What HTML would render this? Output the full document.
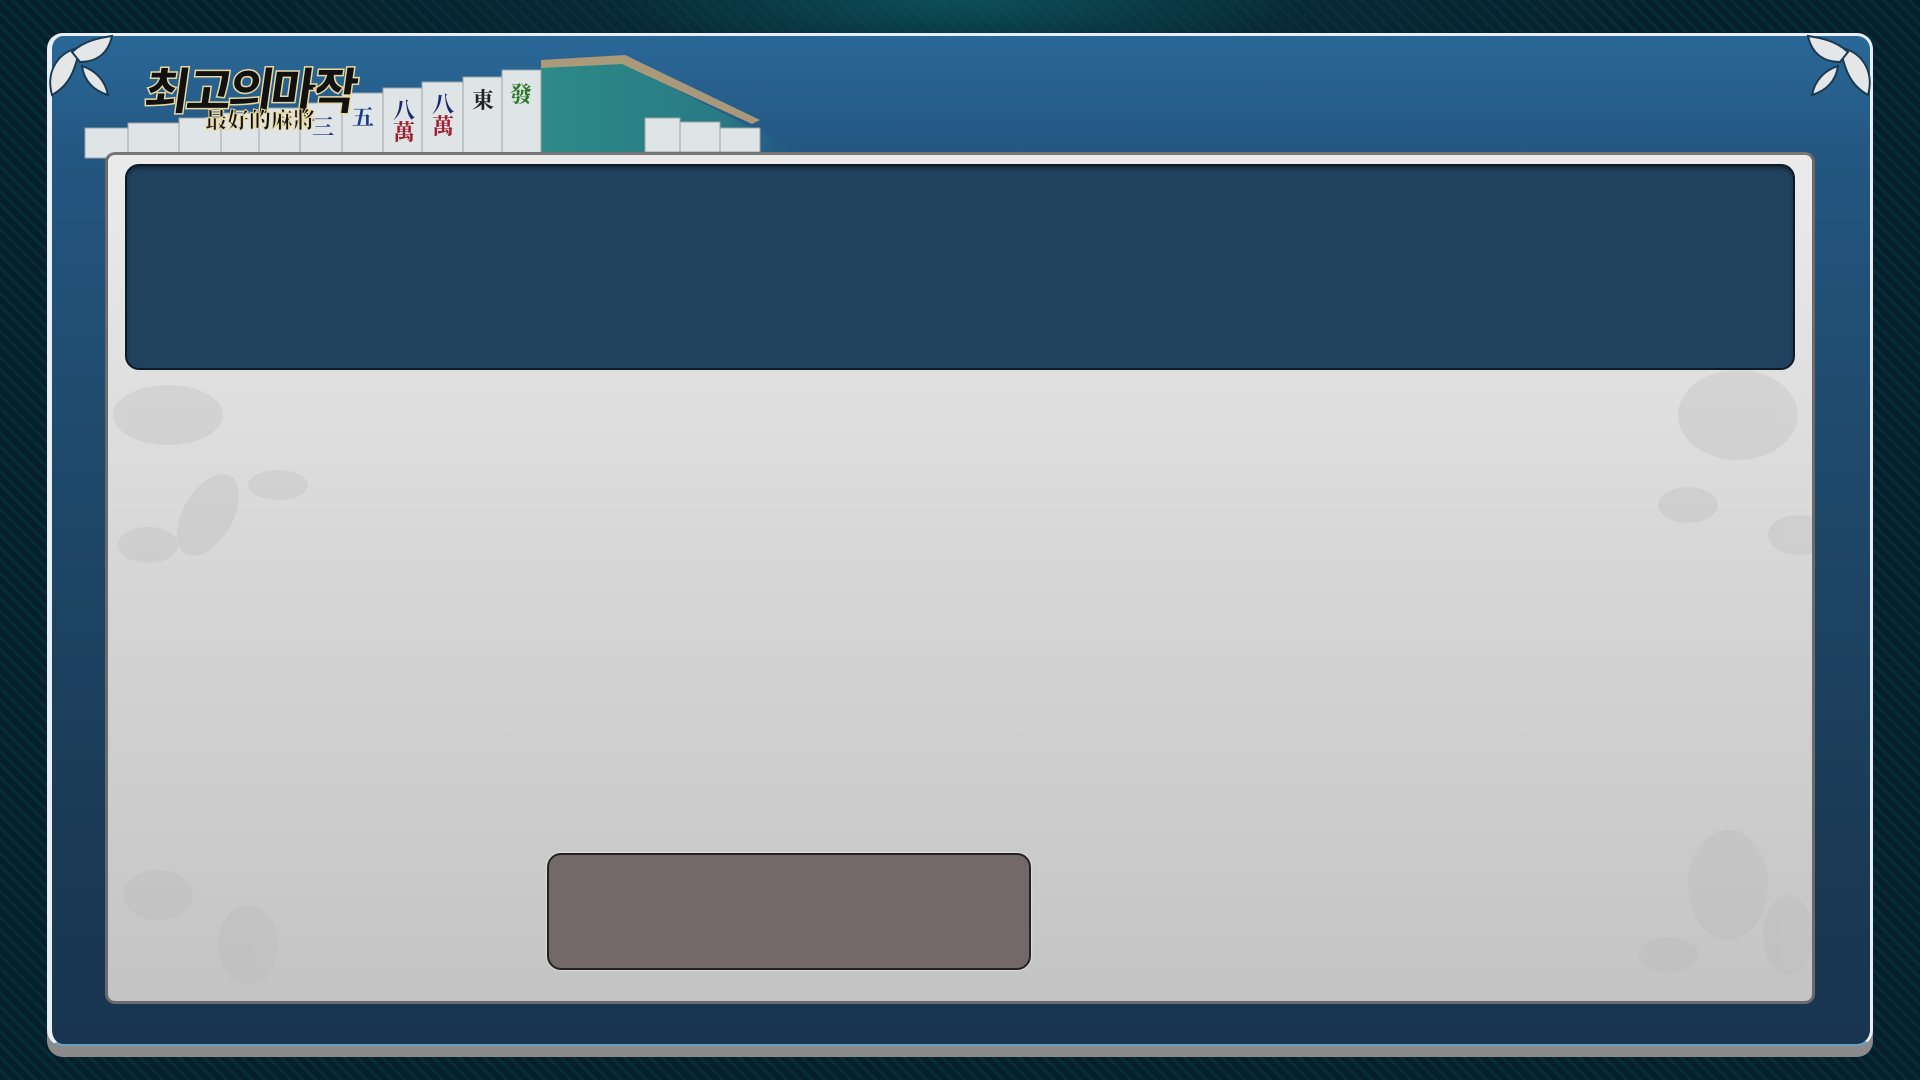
<!DOCTYPE html>
<html><head><meta charset="utf-8"><style>
*{margin:0;padding:0;box-sizing:border-box}
body{width:1920px;height:1080px;overflow:hidden;background:radial-gradient(ellipse 700px 120px at 960px 0,rgba(14,90,100,.8) 0%,rgba(10,51,64,.5) 50%,rgba(0,0,0,0) 100%),repeating-linear-gradient(45deg,#05202a 0 6px,#082b38 6px 9px),#05202a;position:relative;font-family:"Liberation Sans",sans-serif}
.shadow{position:absolute;left:47px;top:40px;width:1826px;height:1017px;border-radius:16px;background:#8a8a8a}
.frame{position:absolute;left:47px;top:33px;width:1826px;height:1013px;border-radius:16px;background:linear-gradient(#2a6898 0%,#235680 12%,#1f4a6c 40%,#1a3a56 80%,#183450 100%);border:3px solid #e8eef2;border-left-width:5px;border-bottom:2px solid #6a9fc4}
.panel{position:absolute;left:105px;top:152px;width:1710px;height:852px;border-radius:10px;background:linear-gradient(#ebebeb,#d6d6d6 50%,#c4c4c4);border:3px solid #6a6a6a;border-top-color:#777;overflow:hidden}
.box{position:absolute;left:125px;top:164px;width:1670px;height:206px;border-radius:14px;background:#21425f;border:2px solid #0e1a24;box-shadow:inset 0 3px 3px rgba(0,0,0,.35)}
.btn{position:absolute;left:547px;top:853px;width:484px;height:117px;border-radius:14px;background:#726968;border:2px solid #222;box-shadow:0 0 2px #fff}
.logo1{position:absolute;left:145px;top:52px;font-family:"Noto Sans CJK KR",sans-serif;font-weight:900;font-size:50px;color:#111;letter-spacing:-4px;-webkit-text-stroke:1.5px #e8d8a0;transform:skewX(-8deg)}
.logo2{position:absolute;left:205px;top:104px;font-family:"Noto Serif CJK SC",serif;font-weight:900;font-size:22px;color:#111;-webkit-text-stroke:1px #e8d8a0}
</style></head><body>
<div class="shadow"></div>
<div class="frame"></div>
<svg style="position:absolute;left:0;top:0" width="1920" height="160">
 <defs><linearGradient id="tg" x1="0" x2="1"><stop offset="0" stop-color="#2c8a88"/><stop offset=".7" stop-color="#2a7a84"/><stop offset="1" stop-color="#23608a" stop-opacity="0"/></linearGradient></defs>
 <polygon points="541,66 622,62 800,152 541,152" fill="url(#tg)"/>
 <polygon points="541,60 625,55 760,120 752,124 622,64 541,68" fill="#b8a078" opacity=".9"/>
 <g fill="#dfe4e6" stroke="#9aa4a8" stroke-width="1">
  <rect x="85" y="128" width="43" height="30"/><rect x="128" y="123" width="51" height="35"/>
  <rect x="179" y="118" width="42" height="40"/><rect x="221" y="113" width="38" height="45"/>
  <rect x="259" y="108" width="41" height="50"/><rect x="300" y="103" width="42" height="55"/>
  <rect x="342" y="93" width="41" height="65"/><rect x="383" y="88" width="39" height="70"/>
  <rect x="422" y="82" width="41" height="76"/><rect x="463" y="77" width="39" height="81"/>
  <rect x="502" y="70" width="39" height="88"/>
 </g>
 <g font-family="Noto Serif CJK SC" font-size="22" font-weight="700">
  <text x="312" y="135" fill="#1a3a8a">三</text><text x="352" y="125" fill="#1a3a8a">五</text>
  <text x="393" y="118" fill="#1a2a6a">八</text><text x="432" y="112" fill="#1a2a6a">八</text>
  <text x="472" y="108" fill="#222">東</text><text x="510" y="102" fill="#2a7a2a">發</text>
  <text x="393" y="140" fill="#a02030">萬</text><text x="432" y="134" fill="#a02030">萬</text>
 </g>
 <g fill="#dfe4e6" stroke="#9aa4a8"><rect x="645" y="118" width="35" height="34"/><rect x="680" y="122" width="40" height="30"/><rect x="720" y="128" width="40" height="24"/></g>
 <g fill="#e4e6e8" stroke="#1a3a50" stroke-width="2">
  <path d="M52,95 C45,70 60,50 80,48 C75,70 70,85 52,95Z"/><path d="M72,52 C85,40 100,38 112,36 C108,55 95,62 80,62Z"/><path d="M82,66 C95,70 105,80 108,95 C92,90 84,80 82,66Z"/>
  <path d="M1868,95 C1875,70 1860,50 1840,48 C1845,70 1850,85 1868,95Z"/><path d="M1848,52 C1835,40 1820,38 1808,36 C1812,55 1825,62 1840,62Z"/><path d="M1838,66 C1825,70 1815,80 1812,95 C1828,90 1836,80 1838,66Z"/>
 </g>
</svg>
<div class="logo1">최고의마작</div>
<div class="logo2">最好的麻將</div>
<div class="panel">
 <svg width="1710" height="852" style="position:absolute;left:0;top:0">
  <g fill="#b8b8b8" opacity=".3">
   <ellipse cx="60" cy="260" rx="55" ry="30"/><ellipse cx="100" cy="360" rx="25" ry="45" transform="rotate(30 100 360)"/><ellipse cx="170" cy="330" rx="30" ry="15"/><ellipse cx="40" cy="390" rx="30" ry="18"/>
   <ellipse cx="1630" cy="260" rx="60" ry="45"/><ellipse cx="1580" cy="350" rx="30" ry="18"/><ellipse cx="1690" cy="380" rx="30" ry="20"/>
   <ellipse cx="50" cy="740" rx="35" ry="25"/><ellipse cx="140" cy="790" rx="30" ry="40"/>
   <ellipse cx="1620" cy="730" rx="40" ry="55"/><ellipse cx="1560" cy="800" rx="30" ry="18"/><ellipse cx="1680" cy="780" rx="25" ry="40"/>
  </g>
 </svg>
</div>
<div class="box"></div>
<div class="btn"></div>
</body></html>
